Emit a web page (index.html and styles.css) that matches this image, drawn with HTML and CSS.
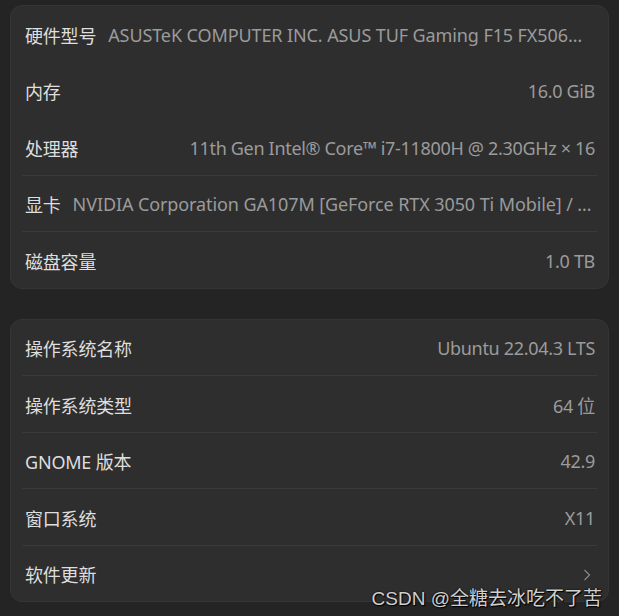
FILE: index.html
```html
<!DOCTYPE html>
<html lang="zh-CN">
<head>
<meta charset="utf-8">
<title>关于</title>
<link rel="stylesheet" href="styles.css">
</head>
<body>
<main class="page">
  <section class="card">
    <div class="row">
      <span class="label">硬件型号</span>
      <span class="value value-long">ASUSTeK COMPUTER INC. ASUS TUF Gaming F15 FX506…</span>
    </div>
    <div class="sep sep-hidden"></div>
    <div class="row">
      <span class="label">内存</span>
      <span class="value">16.0 GiB</span>
    </div>
    <div class="sep sep-hidden"></div>
    <div class="row">
      <span class="label">处理器</span>
      <span class="value">11th Gen Intel® Core™ i7-11800H @ 2.30GHz × 16</span>
    </div>
    <div class="sep"></div>
    <div class="row">
      <span class="label">显卡</span>
      <span class="value value-long">NVIDIA Corporation GA107M [GeForce RTX 3050 Ti Mobile] / …</span>
    </div>
    <div class="sep"></div>
    <div class="row">
      <span class="label">磁盘容量</span>
      <span class="value">1.0 TB</span>
    </div>
  </section>

  <section class="card">
    <div class="row">
      <span class="label">操作系统名称</span>
      <span class="value">Ubuntu 22.04.3 LTS</span>
    </div>
    <div class="sep"></div>
    <div class="row">
      <span class="label">操作系统类型</span>
      <span class="value">64 位</span>
    </div>
    <div class="sep"></div>
    <div class="row">
      <span class="label">GNOME 版本</span>
      <span class="value">42.9</span>
    </div>
    <div class="sep"></div>
    <div class="row">
      <span class="label">窗口系统</span>
      <span class="value">X11</span>
    </div>
    <div class="sep"></div>
    <div class="row">
      <span class="label">软件更新</span>
      <span class="value">
        <svg class="chevron" width="8" height="12" viewBox="0 0 8 12" aria-hidden="true">
          <path d="M1.5 1 L6.5 6 L1.5 11" fill="none" stroke="#8c8c8c" stroke-width="1.1"/>
        </svg>
      </span>
    </div>
  </section>
</main>
<div class="watermark">CSDN @全糖去冰吃不了苦</div>
</body>
</html>
```

FILE: styles.css
```css
html, body {
  margin: 0;
  padding: 0;
  background: #242424;
}

body {
  font-family: "Noto Sans", "Noto Sans CJK SC", sans-serif;
  font-size: 18px;
  width: 619px;
  height: 616px;
  overflow: hidden;
  position: relative;
}

.page {
  display: flex;
  flex-direction: column;
  gap: 30px;
  padding: 5px 10px 0 10px;
}

.card {
  background: #2e2e2e;
  border: 1px solid #353535;
  border-radius: 12px;
  display: flex;
  flex-direction: column;
}

.row {
  box-sizing: border-box;
  height: 55.5px;
  display: flex;
  align-items: center;
  gap: 12px;
  margin: 0 11px;
  padding: 2px 2px 0 3px;
}

.sep {
  height: 1px;
  margin: 0 11px;
  background: #3a3a3a;
}

.sep-hidden {
  background: transparent;
}

.label {
  color: #dedede;
  white-space: nowrap;
  flex: none;
  letter-spacing: -0.2px;
}

.value {
  color: #9b9b9b;
  flex: 1;
  min-width: 0;
  text-align: right;
  white-space: nowrap;
  overflow: hidden;
  text-overflow: ellipsis;
  letter-spacing: -0.32px;
}

.value-long {
  text-align: left;
  letter-spacing: -0.1px;
}

.chevron {
  display: inline-block;
  vertical-align: middle;
  margin-right: 4px;
  margin-top: -2px;
}

.watermark {
  position: absolute;
  right: 17px;
  bottom: 6px;
  font-family: "Liberation Sans", "Noto Sans CJK SC", sans-serif;
  font-size: 19px;
  color: #cfcfcf;
  text-shadow: 1px 1px 1px #000, 0 0 2px #000;
  white-space: nowrap;
}
```
